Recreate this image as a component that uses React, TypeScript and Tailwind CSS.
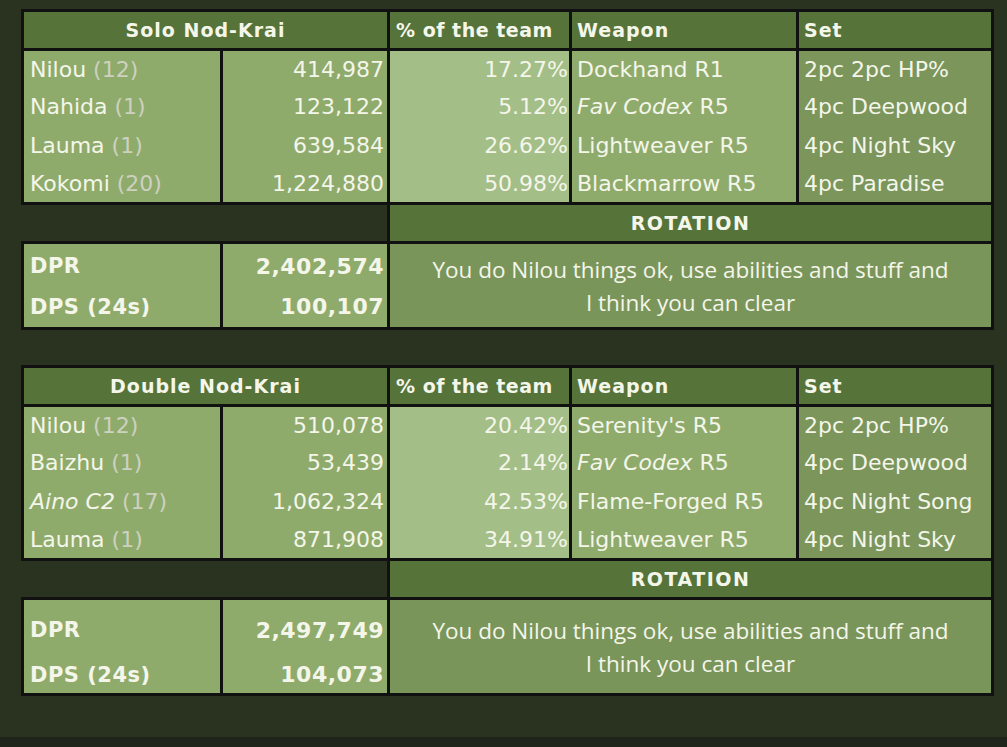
import React from "react";

type Row = {
  name: string;
  italic?: boolean;
  lvl: string;
  dmg: string;
  pct: string;
  weapon: string;
  weaponItalic?: string;
  set: string;
};

type Team = {
  title: string;
  rows: Row[];
  dpr: string;
  dps: string;
  tall?: boolean;
};

const TEAMS: Team[] = [
  {
    title: "Solo Nod-Krai",
    rows: [
      { name: "Nilou", lvl: "12", dmg: "414,987", pct: "17.27%", weapon: "Dockhand R1", set: "2pc 2pc HP%" },
      { name: "Nahida", lvl: "1", dmg: "123,122", pct: "5.12%", weaponItalic: "Fav Codex", weapon: " R5", set: "4pc Deepwood" },
      { name: "Lauma", lvl: "1", dmg: "639,584", pct: "26.62%", weapon: "Lightweaver R5", set: "4pc Night Sky" },
      { name: "Kokomi", lvl: "20", dmg: "1,224,880", pct: "50.98%", weapon: "Blackmarrow R5", set: "4pc Paradise" },
    ],
    dpr: "2,402,574",
    dps: "100,107",
  },
  {
    title: "Double Nod-Krai",
    rows: [
      { name: "Nilou", lvl: "12", dmg: "510,078", pct: "20.42%", weapon: "Serenity's R5", set: "2pc 2pc HP%" },
      { name: "Baizhu", lvl: "1", dmg: "53,439", pct: "2.14%", weaponItalic: "Fav Codex", weapon: " R5", set: "4pc Deepwood" },
      { name: "Aino C2", italic: true, lvl: "17", dmg: "1,062,324", pct: "42.53%", weapon: "Flame-Forged R5", set: "4pc Night Song" },
      { name: "Lauma", lvl: "1", dmg: "871,908", pct: "34.91%", weapon: "Lightweaver R5", set: "4pc Night Sky" },
    ],
    dpr: "2,497,749",
    dps: "104,073",
    tall: true,
  },
];

const cell = "border-[3px] border-[#111111] p-0";

function TeamTable({ team }: { team: Team }) {
  // the second table's stats block is a bit taller and sits lower
  const block = team.tall ? "h-[93px] pt-[20px] pb-[7px]" : "h-[83px] pt-[12px] pb-[9px]";
  return (
    <table className="border-collapse table-fixed w-[970px] text-[#f4f6ea]">
      <colgroup>
        <col className="w-[199px]" />
        <col className="w-[167px]" />
        <col className="w-[182px]" />
        <col className="w-[227px]" />
        <col className="w-[195px]" />
      </colgroup>
      <tbody>
        <tr className="h-[39px] bg-[#56733a] text-[19px] font-bold tracking-[1px]">
          <th colSpan={2} className={`${cell} text-center`}>{team.title}</th>
          <th className={`${cell} text-left pl-[6px] tracking-[0.5px]`}>% of the team</th>
          <th className={`${cell} text-left pl-[5px]`}>Weapon</th>
          <th className={`${cell} text-left pl-[5px]`}>Set</th>
        </tr>
        {team.rows.map((r) => (
          <tr key={r.name} className="h-[38.5px] text-[22px] leading-none">
            <td className={`${cell} border-y-0 bg-[#8fab6c] pl-[6px] whitespace-nowrap`}>
              <span className={r.italic ? "italic" : ""}>{r.name}</span>{" "}
              <span className="text-[#cdd1bf]">({r.lvl})</span>
            </td>
            <td className={`${cell} border-y-0 bg-[#8fab6c] pr-[3px] text-right`}>{r.dmg}</td>
            <td className={`${cell} border-y-0 bg-[#a4be88] pr-[1px] text-right`}>{r.pct}</td>
            <td className={`${cell} border-y-0 bg-[#8fab6c] pl-[5px] whitespace-nowrap`}>
              {r.weaponItalic && <span className="italic">{r.weaponItalic}</span>}
              {r.weapon}
            </td>
            <td className={`${cell} border-y-0 bg-[#7b955b] pl-[5px] whitespace-nowrap`}>{r.set}</td>
          </tr>
        ))}
        <tr className="h-[39px]">
          <td colSpan={2} className="border-y-[3px] border-[#111111] border-l-0 border-r-[3px] p-0" />
          <td colSpan={3} className={`${cell} bg-[#56733a] text-center text-[19px] font-bold tracking-[1.5px]`}>
            ROTATION
          </td>
        </tr>
        <tr>
          <td className={`${cell} bg-[#8fab6c] pl-[6px] text-[21px] leading-none font-bold tracking-[0.5px]`}>
            <div className={`flex flex-col justify-between ${block}`}>
              <span>DPR</span>
              <span>DPS (24s)</span>
            </div>
          </td>
          <td className={`${cell} bg-[#8fab6c] pr-[3px] text-right text-[22px] leading-none font-bold tracking-[0.5px]`}>
            <div className={`flex flex-col justify-between ${block}`}>
              <span>{team.dpr}</span>
              <span>{team.dps}</span>
            </div>
          </td>
          <td
            colSpan={3}
            className={`${cell} bg-[#7a955a] text-center text-[22.5px] leading-[33px] font-['Open_Sans',sans-serif]`}
          >
            You do Nilou things ok, use abilities and stuff and
            <br />
            I think you can clear
          </td>
        </tr>
      </tbody>
    </table>
  );
}

export default function App() {
  return (
    <div className="w-[1007px] h-[747px] bg-[#1f251b] font-['DejaVu_Sans',sans-serif]">
      <div className="h-[737px] bg-[#29331f] pl-[21px] pt-[9px] flex flex-col gap-[35px]">
        {TEAMS.map((t) => (
          <TeamTable key={t.title} team={t} />
        ))}
      </div>
    </div>
  );
}
